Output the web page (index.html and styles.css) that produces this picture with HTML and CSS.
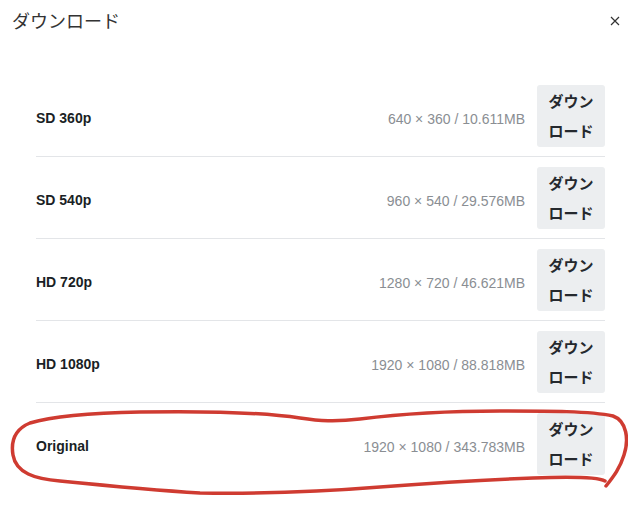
FILE: index.html
```html
<!DOCTYPE html>
<html lang="ja">
<head>
<meta charset="utf-8">
<title>ダウンロード</title>
<link rel="stylesheet" href="styles.css">
</head>
<body>
<div class="dialog">
  <div class="header">
    <h1 class="title">ダウンロード</h1>
    <button class="close" aria-label="閉じる">
      <svg width="10" height="10" viewBox="0 0 10 10"><path d="M1 1L9 9M9 1L1 9" stroke="#333" stroke-width="1.2" fill="none"/></svg>
    </button>
  </div>
  <ul class="list">
    <li class="row"><span class="label">SD 360p</span><span class="meta">640 × 360 / 10.611MB</span><button class="dl">ダウン<br>ロード</button></li>
    <li class="row"><span class="label">SD 540p</span><span class="meta">960 × 540 / 29.576MB</span><button class="dl">ダウン<br>ロード</button></li>
    <li class="row"><span class="label">HD 720p</span><span class="meta">1280 × 720 / 46.621MB</span><button class="dl">ダウン<br>ロード</button></li>
    <li class="row"><span class="label">HD 1080p</span><span class="meta">1920 × 1080 / 88.818MB</span><button class="dl">ダウン<br>ロード</button></li>
    <li class="row"><span class="label">Original</span><span class="meta">1920 × 1080 / 343.783MB</span><button class="dl">ダウン<br>ロード</button></li>
  </ul>
  <svg class="annot" width="628" height="510" viewBox="0 0 628 510">
    <path d="M605 481 C596 476 560 477 533 478 C480 480 420 484 380 487 C330 491 260 494 200 493 C150 490 100 485 60 481 C35 479 16 473 13 455 C10 437 18 428 30 423 C50 417 90 413 140 412 C200 411 260 412 300 418 C320 421 335 422 360 419 C400 414 450 411 500 411 C550 411 590 411 613 416 C627 421 629 440 624 455 C620 468 614 476 606 486"
      fill="none" stroke="#cf3b31" stroke-width="3.5" stroke-linecap="round" stroke-linejoin="round"/>
  </svg>
</div>
</body>
</html>
```

FILE: styles.css
```css
html, body {
  margin: 0;
  padding: 0;
  background: #fff;
}
body {
  font-family: "Liberation Sans", Arial, "Noto Sans CJK JP", sans-serif;
  color: #222;
  width: 628px;
  height: 510px;
  overflow: hidden;
}
.dialog {
  position: relative;
  width: 628px;
  height: 510px;
}
.header {
  display: flex;
  justify-content: space-between;
  align-items: flex-start;
  height: 75px;
  box-sizing: border-box;
  padding: 8px 4px 0 12px;
}
.title {
  margin: 0;
  font-family: "Noto Sans CJK JP", sans-serif;
  font-weight: normal;
  font-size: 18px;
  line-height: 24px;
  color: #333;
}
.close {
  border: 0;
  background: none;
  padding: 8px 4px;
  margin: 0;
  line-height: 0;
}
.list {
  list-style: none;
  margin: 0 23px 0 36px;
  padding: 0;
}
.row {
  display: flex;
  align-items: center;
  padding: 10px 0 9px;
  border-bottom: 1px solid #e3e5e8;
}
.row:last-child {
  border-bottom: 0;
}
.label {
  flex: 1;
  font-size: 14px;
  font-weight: bold;
  color: #1a1f25;
  margin-top: 3px;
}
.meta {
  font-size: 14px;
  color: #8a8e93;
  margin-right: 12px;
  margin-top: 5px;
}
.dl {
  font-family: "Noto Sans CJK JP", sans-serif;
  font-size: 15px;
  font-weight: bold;
  line-height: 30px;
  color: #25292e;
  background: #eceef0;
  border: 0;
  border-radius: 3px;
  width: 68px;
  height: 62px;
  padding: 1px 0;
  text-align: center;
}
.annot {
  position: absolute;
  left: 0;
  top: 0;
  pointer-events: none;
}
```
